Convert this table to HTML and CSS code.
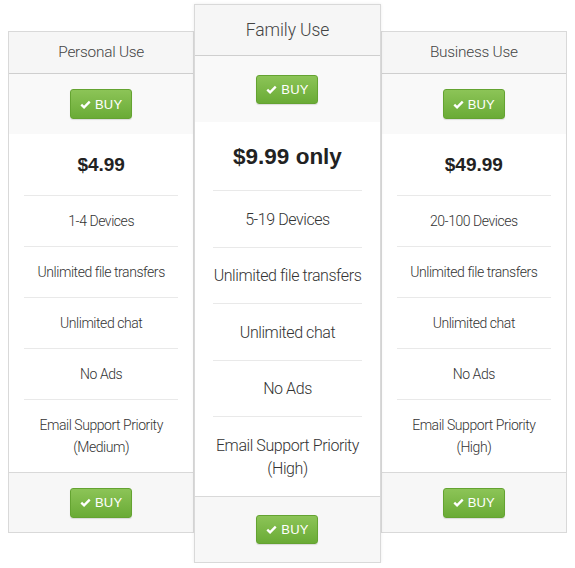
FILE: index.html
```html
<!DOCTYPE html>
<html>
<head>
<meta charset="utf-8">
<link rel="stylesheet" href="styles.css">
</head>
<body>
<div class="pricing">
  <div class="plan">
    <div class="plan-head">Personal Use</div>
    <div class="plan-buy"><a class="btn"><svg viewBox="0 0 12 10" width="11" height="9"><path d="M1.3 5.2 L4.4 8.2 L10.7 1.8" fill="none" stroke="#fff" stroke-width="2.6"/></svg>BUY</a></div>
    <ul class="plan-list">
      <li class="price">$4.99</li>
      <li>1-4 Devices</li>
      <li>Unlimited file transfers</li>
      <li>Unlimited chat</li>
      <li>No Ads</li>
      <li>Email Support Priority<br>(Medium)</li>
    </ul>
    <div class="plan-foot"><a class="btn"><svg viewBox="0 0 12 10" width="11" height="9"><path d="M1.3 5.2 L4.4 8.2 L10.7 1.8" fill="none" stroke="#fff" stroke-width="2.6"/></svg>BUY</a></div>
  </div>
  <div class="plan featured">
    <div class="plan-head">Family Use</div>
    <div class="plan-buy"><a class="btn"><svg viewBox="0 0 12 10" width="11" height="9"><path d="M1.3 5.2 L4.4 8.2 L10.7 1.8" fill="none" stroke="#fff" stroke-width="2.6"/></svg>BUY</a></div>
    <ul class="plan-list">
      <li class="price">$9.99 only</li>
      <li>5-19 Devices</li>
      <li>Unlimited file transfers</li>
      <li>Unlimited chat</li>
      <li>No Ads</li>
      <li>Email Support Priority<br>(High)</li>
    </ul>
    <div class="plan-foot"><a class="btn"><svg viewBox="0 0 12 10" width="11" height="9"><path d="M1.3 5.2 L4.4 8.2 L10.7 1.8" fill="none" stroke="#fff" stroke-width="2.6"/></svg>BUY</a></div>
  </div>
  <div class="plan">
    <div class="plan-head">Business Use</div>
    <div class="plan-buy"><a class="btn"><svg viewBox="0 0 12 10" width="11" height="9"><path d="M1.3 5.2 L4.4 8.2 L10.7 1.8" fill="none" stroke="#fff" stroke-width="2.6"/></svg>BUY</a></div>
    <ul class="plan-list">
      <li class="price">$49.99</li>
      <li>20-100 Devices</li>
      <li>Unlimited file transfers</li>
      <li>Unlimited chat</li>
      <li>No Ads</li>
      <li>Email Support Priority<br>(High)</li>
    </ul>
    <div class="plan-foot"><a class="btn"><svg viewBox="0 0 12 10" width="11" height="9"><path d="M1.3 5.2 L4.4 8.2 L10.7 1.8" fill="none" stroke="#fff" stroke-width="2.6"/></svg>BUY</a></div>
  </div>
</div>
</body>
</html>
```
FILE: styles.css
```css
* { box-sizing: border-box; }
html, body { margin: 0; padding: 0; background: #fff; }
body {
  font-family: Roboto, "Liberation Sans", Arial, sans-serif;
  font-weight: 300;
  color: #333;
}
.pricing {
  display: flex;
  align-items: flex-start;
  padding: 4px 8px 0 8px;
}
.plan {
  width: 186.5px;
  margin-top: 27px;
  border: 1px solid #d9d9d9;
  background: #fff;
  text-align: center;
}
.plan-head {
  height: 42px;
  line-height: 41px;
  font-size: 15.4px;
  letter-spacing: -0.25px;
  color: #444;
  background: #f6f6f6;
  border-bottom: 1px solid #cfcfcf;
}
.plan-buy {
  height: 60px;
  display: flex;
  align-items: center;
  justify-content: center;
  background: #f9f9f9;
}
.plan-list {
  list-style: none;
  margin: 0;
  padding: 0 15px;
}
.plan-list li {
  font-size: 14px;
  letter-spacing: -0.45px;
  line-height: 22px;
  padding: 14px 0;
  white-space: nowrap;
  border-bottom: 1px solid #e9e9e9;
}
.plan-list li:last-child { border-bottom: none; }
.plan-list li.price {
  font-family: "Liberation Sans", Arial, sans-serif;
  font-size: 19px;
  letter-spacing: 0;
  font-weight: bold;
  color: #222;
  line-height: 32px;
  padding: 15px 0 14px;
}
.plan-foot {
  height: 60px;
  display: flex;
  align-items: center;
  justify-content: center;
  background: #f7f7f7;
  border-top: 1px solid #d9d9d9;
}
.btn {
  display: inline-flex;
  align-items: center;
  justify-content: center;
  gap: 4px;
  width: 62px;
  height: 30px;
  border: 1px solid #64a331;
  border-radius: 3px;
  background: linear-gradient(#8cc457, #6aab36);
  color: #fff;
  font-family: "Liberation Sans", Arial, sans-serif;
  font-weight: normal;
  font-size: 13px;
  letter-spacing: 0.2px;
  box-shadow: 0 1px 1px rgba(0,0,0,0.12);
}
.btn svg { display: block; }

.featured {
  margin-top: 0;
  position: relative;
  z-index: 1;
  box-shadow: 0 0 3px rgba(0,0,0,0.08);
}
.featured .plan-head {
  height: 51px;
  line-height: 50px;
  font-size: 17.5px;
  letter-spacing: -0.1px;
}
.featured .plan-buy { height: 66px; }
.featured .plan-buy .btn,
.featured .plan-foot .btn { height: 29px; }
.featured .plan-list { padding: 0 18px; }
.featured .plan-list li {
  font-size: 16px;
  letter-spacing: -0.42px;
  line-height: 23px;
  padding: 16.6px 0 16px;
}
.featured .plan-list li.price {
  font-size: 22.5px;
  letter-spacing: 0;
  line-height: 35px;
  padding: 17px 0 16px;
}
.featured .plan-foot { height: 66px; }
```
